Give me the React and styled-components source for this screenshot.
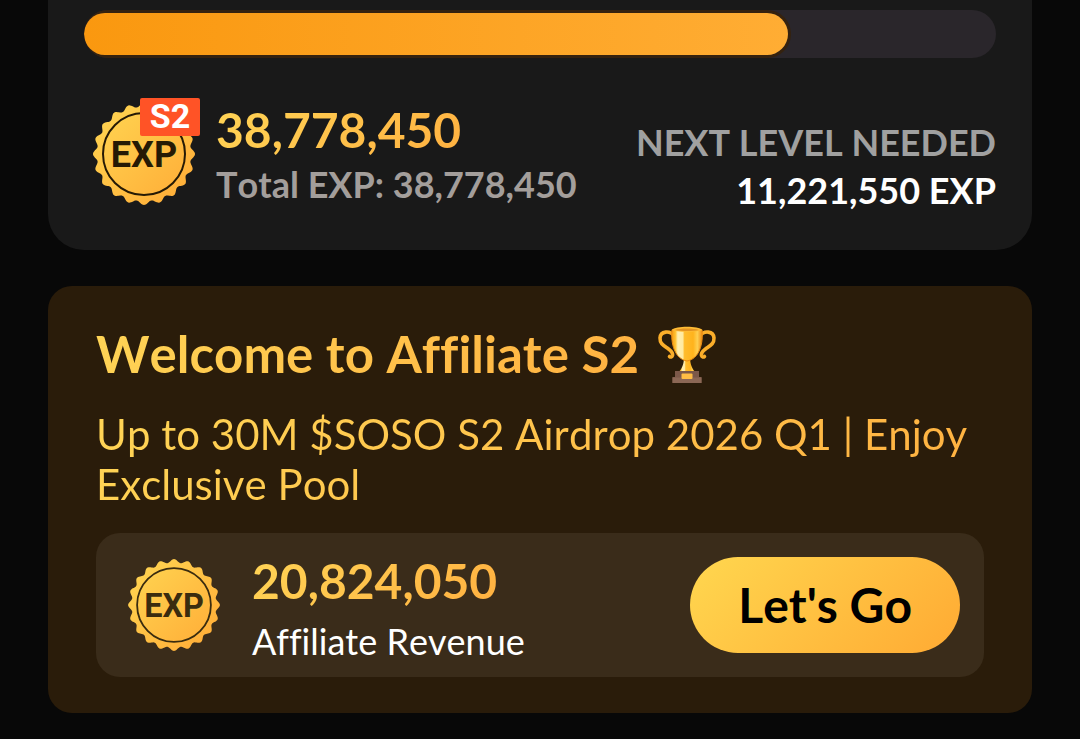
import React from "react";
import styled, { createGlobalStyle, css } from "styled-components";

const GlobalStyle = createGlobalStyle`
  * {
    box-sizing: border-box;
  }

  body {
    margin: 0;
    background: #080808;
    color: #ffffff;
    font-family: Lato, "Liberation Sans", sans-serif;
    font-kerning: none;
    font-variant-ligatures: none;
  }

  h2,
  p {
    margin: 0;
  }
`;

const goldText = css`
  background: linear-gradient(135deg, #ffd556 0%, #ffb040 100%);
  background-clip: text;
  -webkit-background-clip: text;
  color: transparent;
`;

const Page = styled.main`
  display: flex;
  flex-direction: column;
  gap: 36px;
  padding: 0 48px 24px;
`;

const LevelCard = styled.section`
  padding: 10px 36px 36px;
  border-radius: 0 0 36px 36px;
  background: #191919;
`;

const Track = styled.div`
  display: flex;
  align-items: center;
  height: 48px;
  border-radius: 24px;
  background: #2a262b;
  overflow: hidden;
`;

const Fill = styled.div`
  height: 42px;
  border-radius: 21px;
  background: linear-gradient(90deg, #fa980f 0%, #ffad34 100%);
  box-shadow: 0 0 0 3px #35220f;
`;

const LevelRow = styled.div`
  display: flex;
  align-items: center;
  gap: 12px;
  padding-top: 36px;
`;

const Stack = styled.div`
  display: flex;
  flex-direction: column;
  gap: ${({ $gap }) => $gap || 0}px;
  align-items: ${({ $end }) => ($end ? "flex-end" : "flex-start")};
  margin-left: ${({ $end }) => ($end ? "auto" : "0")};
  padding-top: ${({ $top }) => $top || 0}px;
`;

const Amount = styled.p`
  ${goldText}
  font-size: 48px;
  font-weight: 700;
  line-height: 60px;
`;

const Label = styled.p`
  color: ${({ $color }) => $color || "#ffffff"};
  font-size: 36px;
  font-weight: ${({ $weight }) => $weight || 400};
  line-height: 48px;
`;

const AffiliateCard = styled.section`
  padding: 36px 48px;
  border-radius: 24px;
  background: #2a1c0a;
`;

const Title = styled.h2`
  display: flex;
  align-items: center;
  gap: 18px;
  font-size: 51px;
  font-weight: 700;
  line-height: 64px;

  span {
    ${goldText}
  }
`;

const Lead = styled.p`
  ${goldText}
  margin-top: 23px;
  font-size: 42px;
  line-height: 50px;
`;

const RevenueBox = styled.div`
  display: flex;
  align-items: center;
  gap: 24px;
  margin-top: 24px;
  padding: 12px 24px;
  border-radius: 24px;
  background: #3a2c1a;
`;

const GoButton = styled.button`
  margin-left: auto;
  padding: 18px 48px;
  border: 0;
  border-radius: 48px;
  background: linear-gradient(135deg, #ffd74f 0%, #ffaa33 100%);
  color: #000000;
  font: inherit;
  font-size: 48px;
  font-weight: 700;
  line-height: 60px;
  font-kerning: none;
  cursor: pointer;
`;

const BadgeSvg = styled.svg`
  flex: none;
`;

// Wavy outline of the seal, 20 teeth round the centre
const sealPath = (() => {
  const points = [];
  for (let i = 0; i < 360; i += 1) {
    const a = (i * Math.PI) / 180;
    const r = 49 + 2 * Math.cos(20 * a);
    points.push(`${(60 + r * Math.sin(a)).toFixed(2)} ${(60 - r * Math.cos(a)).toFixed(2)}`);
  }
  return `M${points.join("L")}Z`;
})();

const ExpBadge = ({ id, size, tag, ink }) => (
  <BadgeSvg width={size} height={size} viewBox="0 0 120 120" aria-hidden="true">
    <defs>
      <linearGradient id={id} x1="0" y1="0" x2="1" y2="1">
        <stop offset="0.1" stopColor="#ffd350" />
        <stop offset="0.9" stopColor="#ffae38" />
      </linearGradient>
    </defs>
    <path d={sealPath} fill={`url(#${id})`} />
    <circle cx="60" cy="60" r="41" fill="none" stroke={ink} strokeWidth="2" />
    <text x="60" y="73" textAnchor="middle" fontFamily="Roboto, sans-serif" fontSize="36" fontWeight="700" fill={ink}>
      EXP
    </text>
    {tag && (
      <>
        <rect x="56" y="4" width="60" height="38" rx="2" fill="#ff5326" />
        <text x="86" y="34" textAnchor="middle" fontFamily="Roboto, sans-serif" fontSize="34" fontWeight="700" fill="#ffffff">
          {tag}
        </text>
      </>
    )}
  </BadgeSvg>
);

const Trophy = () => (
  <svg width="60" height="60" viewBox="0 0 60 60" aria-hidden="true">
    <defs>
      <linearGradient id="cup" x1="0" x2="1">
        <stop offset="0" stopColor="#f59a14" />
        <stop offset="0.12" stopColor="#ffc130" />
        <stop offset="0.2" stopColor="#ffeeb0" />
        <stop offset="0.36" stopColor="#ffeaa0" />
        <stop offset="0.42" stopColor="#ffbc2c" />
        <stop offset="0.7" stopColor="#ffb31c" />
        <stop offset="0.84" stopColor="#ffcf50" />
        <stop offset="1" stopColor="#ee8a12" />
      </linearGradient>
    </defs>
    <g fill="none" stroke="#fbae2a" strokeWidth="3.6" strokeLinecap="round">
      <path d="M17 12C13 6 3.500 7 3 14c-.3 6 4.500 8 8.500 11 3 2.300 4.500 4.500 4 6.500-.5 1.600-2 1.800-3 1" />
      <path d="M43 12c4-6 13.500-5 14 2 .3 6-4.500 8-8.500 11-3 2.300-4.500 4.500-4 6.500.5 1.600 2 1.800 3 1" />
    </g>
    <path d="M27 35h6c.5 6 2 9 5 13H22c3-4 4.500-7 5-13Z" fill="url(#cup)" />
    <path d="M15 6h30c1.500 14-3 29-15 31C18 35 13.500 20 15 6Z" fill="url(#cup)" stroke="#e98a12" strokeWidth="1" />
    <path d="M14.500 6C19 1.600 41 1.600 45.500 6 41 8.400 19 8.400 14.500 6Z" fill="#ffbc35" />
    <path d="M18 6c5-2 19-2 24 0-5 1.400-19 1.400-24 0Z" fill="#e39422" />
    <path d="M18 47h24v6h2.500v6h-29v-6H18Z" fill="#7b5849" />
    <path d="M15.500 53.500h29V59h-29Z" fill="#8b6755" />
    <rect x="24.500" y="49.500" width="11" height="5.500" rx="1" fill="#ffbd45" />
  </svg>
);

const LEVEL_PERCENT = 77.2;

const App = () => {
  return (
    <>
      <GlobalStyle />
      <Page>
        <LevelCard>
          <Track role="progressbar" aria-label="Level progress" aria-valuenow={LEVEL_PERCENT}>
            <Fill style={{ width: `${LEVEL_PERCENT}%` }} />
          </Track>
          <LevelRow>
            <ExpBadge id="seal-total" size={120} tag="S2" ink="#261a05" />
            <Stack>
              <Amount>38,778,450</Amount>
              <Label $color="#a39e9b" $weight={700}>Total EXP: 38,778,450</Label>
            </Stack>
            <Stack $end $top={24}>
              <Label $color="#a0a0a0" $weight={700}>NEXT LEVEL NEEDED</Label>
              <Label $weight={700}>11,221,550 EXP</Label>
            </Stack>
          </LevelRow>
        </LevelCard>

        <AffiliateCard>
          <Title>
            <span>Welcome to Affiliate S2</span>
            <Trophy />
          </Title>
          <Lead>Up to 30M $SOSO S2 Airdrop 2026 Q1 | Enjoy Exclusive Pool</Lead>
          <RevenueBox>
            <ExpBadge id="seal-revenue" size={108} ink="#3a2c0f" />
            <Stack $gap={6} $top={6}>
              <Amount>20,824,050</Amount>
              <Label>Affiliate Revenue</Label>
            </Stack>
            <GoButton type="button">Let's Go</GoButton>
          </RevenueBox>
        </AffiliateCard>
      </Page>
    </>
  );
};

export default App;
